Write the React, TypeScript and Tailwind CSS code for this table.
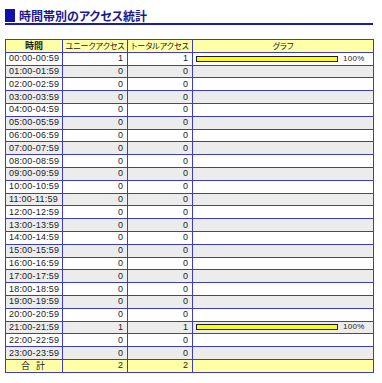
import React from 'react';

interface HourRow {
  label: string;
  unique: number;
  total: number;
}

const rows: HourRow[] = Array.from({ length: 24 }, (_, h) => {
  const hh = String(h).padStart(2, '0');
  const hit = h === 0 || h === 21 ? 1 : 0;
  return { label: `${hh}:00-${hh}:59`, unique: hit, total: hit };
});

const maxTotal = 1;

const cell = 'border border-[#3c3cc8] h-[12.8px] p-0 leading-none';
const jp = "font-['Noto_Sans_CJK_JP',sans-serif] [font-feature-settings:'palt']";

function Bar({ value }: { value: number }) {
  if (!value) return null;
  const pct = Math.round((value / maxTotal) * 100);
  return (
    <div className="flex items-center pl-[3px]">
      <div className="h-[6px] w-[142px] border border-[#1a1a40] bg-[#ffff00]" />
      <span className="ml-[5px] text-[8px] tracking-[0.3px]">{pct}%</span>
    </div>
  );
}

export default function App() {
  return (
    <div className="w-[382px] h-[383px] bg-white pl-[5px] pt-[9px] text-[#222] font-['Liberation_Sans','Noto_Sans_CJK_JP',sans-serif]">
      <div className="flex items-center w-[368px] h-[14px] border-b-2 border-[#1c1ca8] box-content">
        <div className="w-[10px] h-[13px] bg-[#1010b0] self-start" />
        <h1 className={`ml-[4px] text-[12px] font-bold leading-none text-[#1a1a90] ${jp}`}>
          時間帯別のアクセス統計
        </h1>
      </div>

      <table className="mt-[14px] w-[369px] table-fixed border-collapse text-[9px]">
        <colgroup>
          <col className="w-[57px]" />
          <col className="w-[65px]" />
          <col className="w-[65px]" />
          <col />
        </colgroup>
        <thead>
          <tr className="bg-[#ffffa6]">
            <th className={`${cell} font-bold text-center ${jp}`}>時間</th>
            <th className={`${cell} font-normal text-center text-[8px] ${jp}`}>ユニークアクセス</th>
            <th className={`${cell} font-normal text-center text-[8px] ${jp}`}>トータルアクセス</th>
            <th className={`${cell} font-normal text-center text-[8px] ${jp}`}>グラフ</th>
          </tr>
        </thead>
        <tbody>
          {rows.map((r, i) => (
            <tr key={r.label} className={i % 2 === 0 ? 'bg-white' : 'bg-[#ececec]'}>
              <td className={`${cell} pl-[3px] tracking-[0.2px]`}>{r.label}</td>
              <td className={`${cell} text-right pr-[4px]`}>{r.unique}</td>
              <td className={`${cell} text-right pr-[4px]`}>{r.total}</td>
              <td className={cell}>
                <Bar value={r.total} />
              </td>
            </tr>
          ))}
          <tr className="bg-[#ffffa6]">
            <td className={`${cell} text-center text-[9px] tracking-[2px] ${jp}`}>合 計</td>
            <td className={`${cell} text-right pr-[4px]`}>2</td>
            <td className={`${cell} text-right pr-[4px]`}>2</td>
            <td className={cell} />
          </tr>
        </tbody>
      </table>
    </div>
  );
}
